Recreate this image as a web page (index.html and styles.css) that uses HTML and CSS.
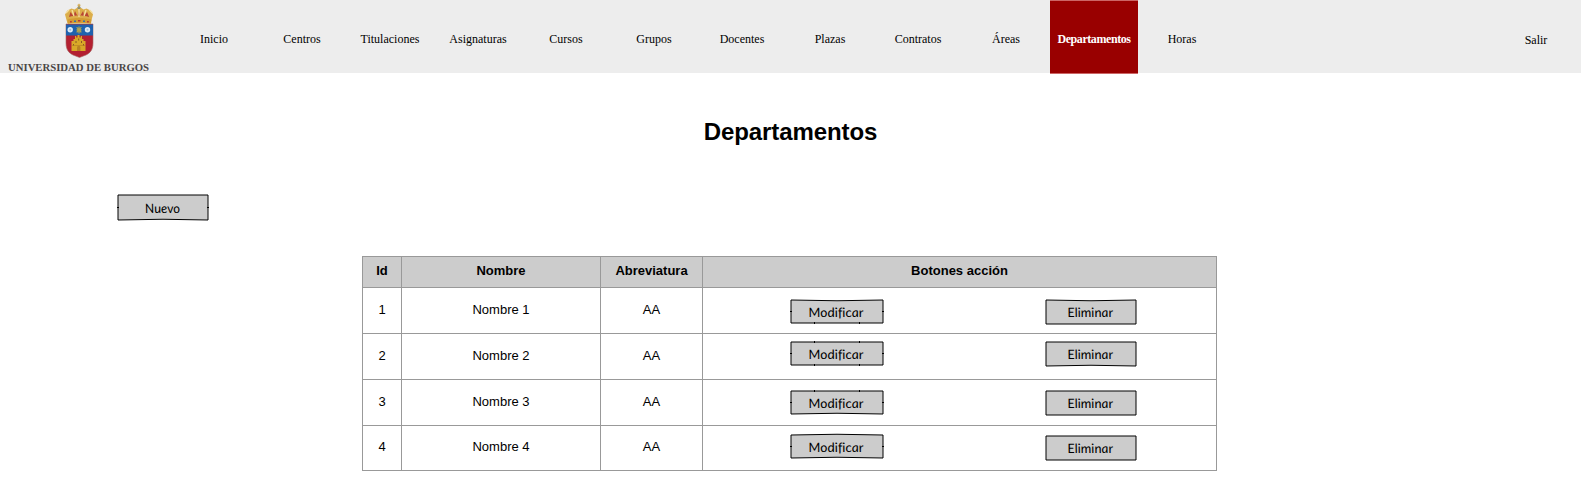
FILE: index.html
```html
<!DOCTYPE html>
<html lang="es">
<head>
<meta charset="utf-8">
<title>Departamentos</title>
<link rel="stylesheet" href="styles.css">
</head>
<body>
<header class="topbar">
  <svg class="logo" viewBox="0 0 170 73" role="img" aria-label="Universidad de Burgos">
    <path d="M66 24h27v19c0 7-3 10-7 12l-6.500 2.500L73 55c-4-2-7-5-7-12z" fill="#b32031" stroke="#a56a65" stroke-width=".6"/>
    <path d="M66 24.500h27v11H66z" fill="#1f62ae"/>
    <circle cx="70.200" cy="29.800" r="2.700" fill="#dcebf7"/><circle cx="87.500" cy="29.800" r="2.700" fill="#dcebf7"/>
    <circle cx="70.200" cy="29.800" r="1" fill="#9dbfe0"/><circle cx="87.500" cy="29.800" r="1" fill="#9dbfe0"/>
    <path d="M79 26.500v7M76.500 27.500c2 0 2 4.500 0 4.500M81.500 27.500c-2 0-2 4.500 0 4.500M76.500 29.800h5" fill="none" stroke="#b0a552" stroke-width="1.200"/>
    <path d="M71.500 51V41h2v-2h1.500v-3h1.200v1.500h1.300V35h2v2.500h1.300V36H82v3h1.500v2h2v10z" fill="#d9a928"/>
    <path d="M73.500 44v2M83.500 44v2M76 41v2M81.500 41v2M78.700 38.500v2" stroke="#8b5a22" stroke-width="1"/>
    <path d="M77 51v-3.500a1.700 1.700 0 0 1 3.400 0V51z" fill="#b98322"/>
    <path d="M72 45.500h13" stroke="#b98322" stroke-width=".7"/>
    <path d="M67.500 23.500l-2.500-9 2.500-4 4-2 3 1 3-2h3l3 2 3-1 4 2 2.500 4-2.500 9z" fill="#dcae4a"/>
    <path d="M69 17l1.500-5 3 4 1.500-5 2.500 5 1.300-5 1.300 5 3-5 1 5 3-4 2 5c-6-2-14-2-20.100 0z" fill="#b84535"/>
    <path d="M66 13l3-3M72 10l2 6M79 9v8M86 10l-2 6M92.500 13l-3-3" stroke="#f4dfa0" stroke-width="1.300"/>
    <path d="M67.500 19.500c7-2 16-2 24 0l-.500 4.300c-7-1.400-16-1.400-23 0z" fill="#d39b33"/>
    <path d="M70 21.700h1.800M78 20.700h2.500M87 21.700h1.800" stroke="#b93a35" stroke-width="1.600"/>
    <path d="M74 21.200h2M83 21.200h2" stroke="#3673a8" stroke-width="1.600"/>
    <circle cx="79" cy="7.500" r="1.500" fill="#7d8a80"/>
    <path d="M79 3.800v4M77.500 5.200h3" stroke="#cfa13d" stroke-width="1"/>
    <text class="logo-name" x="8" y="71" textLength="141" lengthAdjust="spacingAndGlyphs">UNIVERSIDAD DE BURGOS</text>
  </svg>
  <nav class="menu">
    <a>Inicio</a><a>Centros</a><a>Titulaciones</a><a>Asignaturas</a><a>Cursos</a><a>Grupos</a><a>Docentes</a><a>Plazas</a><a>Contratos</a><a>Áreas</a><a class="active">Departamentos</a><a>Horas</a>
  </nav>
  <a class="logout">Salir</a>
</header>
<main>
  <h1>Departamentos</h1>
  <svg class="btn new" viewBox="0 0 92 28"><path d="M1 1H91V26Q46 24.500 1 26Z"/><path class="tick" d="M0 13.500h2M90 13.500h2"/><text transform="translate(28.500 18.500) skewX(8)" textLength="35" lengthAdjust="spacingAndGlyphs">Nuevo</text></svg>
  <section class="grid">
    <div class="th">Id</div><div class="th">Nombre</div><div class="th">Abreviatura</div><div class="th">Botones acción</div>

    <div class="td">1</div><div class="td">Nombre 1</div><div class="td">AA</div>
    <div class="actions r1">
      <svg class="btn mod" viewBox="0 0 94 28"><path d="M1 1Q47 2.500 93 1V24H1Z"/><path class="tick" d="M0 12.500h2M92 12.500h2M24.500 23v2M69.500 23v2"/><text transform="translate(19 17.500) skewX(8)" textLength="55" lengthAdjust="spacingAndGlyphs">Modificar</text></svg>
      <svg class="btn del" viewBox="0 0 92 28"><path d="M1 1Q46 2.500 91 1V25H1Z"/><text transform="translate(23 17.500) skewX(8)" textLength="45.500" lengthAdjust="spacingAndGlyphs">Eliminar</text></svg>
    </div>

    <div class="td">2</div><div class="td">Nombre 2</div><div class="td">AA</div>
    <div class="actions r2">
      <svg class="btn mod" viewBox="0 0 94 28"><path d="M1 1H93V24H1Z"/><path class="tick" d="M0 12.500h2M92 12.500h2M24.500 0v2M69.500 0v2M24.500 23v2M69.500 23v2"/><text transform="translate(19 17.500) skewX(8)" textLength="55" lengthAdjust="spacingAndGlyphs">Modificar</text></svg>
      <svg class="btn del" viewBox="0 0 92 28"><path d="M1 1H91V25Q46 23.500 1 25Z"/><text transform="translate(23 17.500) skewX(8)" textLength="45.500" lengthAdjust="spacingAndGlyphs">Eliminar</text></svg>
    </div>

    <div class="td">3</div><div class="td">Nombre 3</div><div class="td">AA</div>
    <div class="actions r3">
      <svg class="btn mod" viewBox="0 0 94 28"><path d="M1 1H93V24Q47 22.500 1 24Z"/><path class="tick" d="M0 12.500h2M92 12.500h2M24.500 0v2M69.500 0v2"/><text transform="translate(19 17.500) skewX(8)" textLength="55" lengthAdjust="spacingAndGlyphs">Modificar</text></svg>
      <svg class="btn del" viewBox="0 0 92 28"><path d="M1 1H91V25H1Z"/><text transform="translate(23 17.500) skewX(8)" textLength="45.500" lengthAdjust="spacingAndGlyphs">Eliminar</text></svg>
    </div>

    <div class="td last">4</div><div class="td last">Nombre 4</div><div class="td last">AA</div>
    <div class="actions r4">
      <svg class="btn mod" viewBox="0 0 94 28"><path d="M1 1Q47 -.5 93 1V24Q47 22.500 1 24Z"/><path class="tick" d="M0 12.500h2M92 12.500h2"/><text transform="translate(19 17.500) skewX(8)" textLength="55" lengthAdjust="spacingAndGlyphs">Modificar</text></svg>
      <svg class="btn del" viewBox="0 0 92 28"><path d="M1 1H91V25H1Z"/><text transform="translate(23 17.500) skewX(8)" textLength="45.500" lengthAdjust="spacingAndGlyphs">Eliminar</text></svg>
    </div>
  </section>
</main>
</body>
</html>
```
FILE: styles.css
```css
* { box-sizing: border-box; }
body { margin: 0; background: #fff; color: #000; font-family: "Liberation Sans", Arial, sans-serif; overflow: hidden; }

.topbar { display: flex; width: 1581px; height: 73px; background: #ededed; font: 12px/14px "Liberation Serif", "Times New Roman", serif; }
.logo { width: 170px; height: 73px; flex: none; }
.logo-name { font: bold 10px "Liberation Serif", serif; fill: #4a4646; }
.menu { display: flex; height: 74px; }
.menu a { width: 88px; padding-top: 32px; text-align: center; }
.menu .active { background: #900; color: #fff; font-weight: bold; letter-spacing: -.42px; padding-top: 31px; border: solid #c66; border-width: 1px 0; white-space: nowrap; }
.logout { margin-left: auto; width: 90px; padding-top: 33px; text-align: center; }

h1 { margin: 45px 1px 0 0; height: 28px; font-size: 24px; line-height: 28px; letter-spacing: -.08px; text-align: center; }

.btn { display: block; height: 28px; flex: none; overflow: visible; }
.btn path { fill: #ccc; stroke: #000; stroke-width: 1; }
.btn .tick { fill: none; }
.btn text { font: italic 13px Lato, "Open Sans", sans-serif; font-variant-ligatures: none; fill: #000; }
.new { width: 92px; margin: 48px 0 34px 117px; }
.mod { width: 94px; }
.del { width: 92px; }

.grid { display: grid; width: 855px; margin-left: 362px; padding: 1px; gap: 1px; background: #999; grid-template-columns: 38px 198px 101px 513px; grid-template-rows: 30px 45px 45px 45px 44px; font-size: 13px; line-height: 15px; text-align: center; }
.th { background: #ccc; font-weight: bold; padding-top: 6px; }
.td { background: #fff; padding-top: 14px; }
.td.last { padding-top: 13px; }
.actions { display: flex; gap: 161px; background: #fff; padding-left: 87px; }
.r1 { padding-top: 11px; }
.r2 { padding-top: 7px; }
.r3 { padding-top: 10px; }
.r4 { padding-top: 8px; }
.r4 .del { margin-top: 1px; }
```
